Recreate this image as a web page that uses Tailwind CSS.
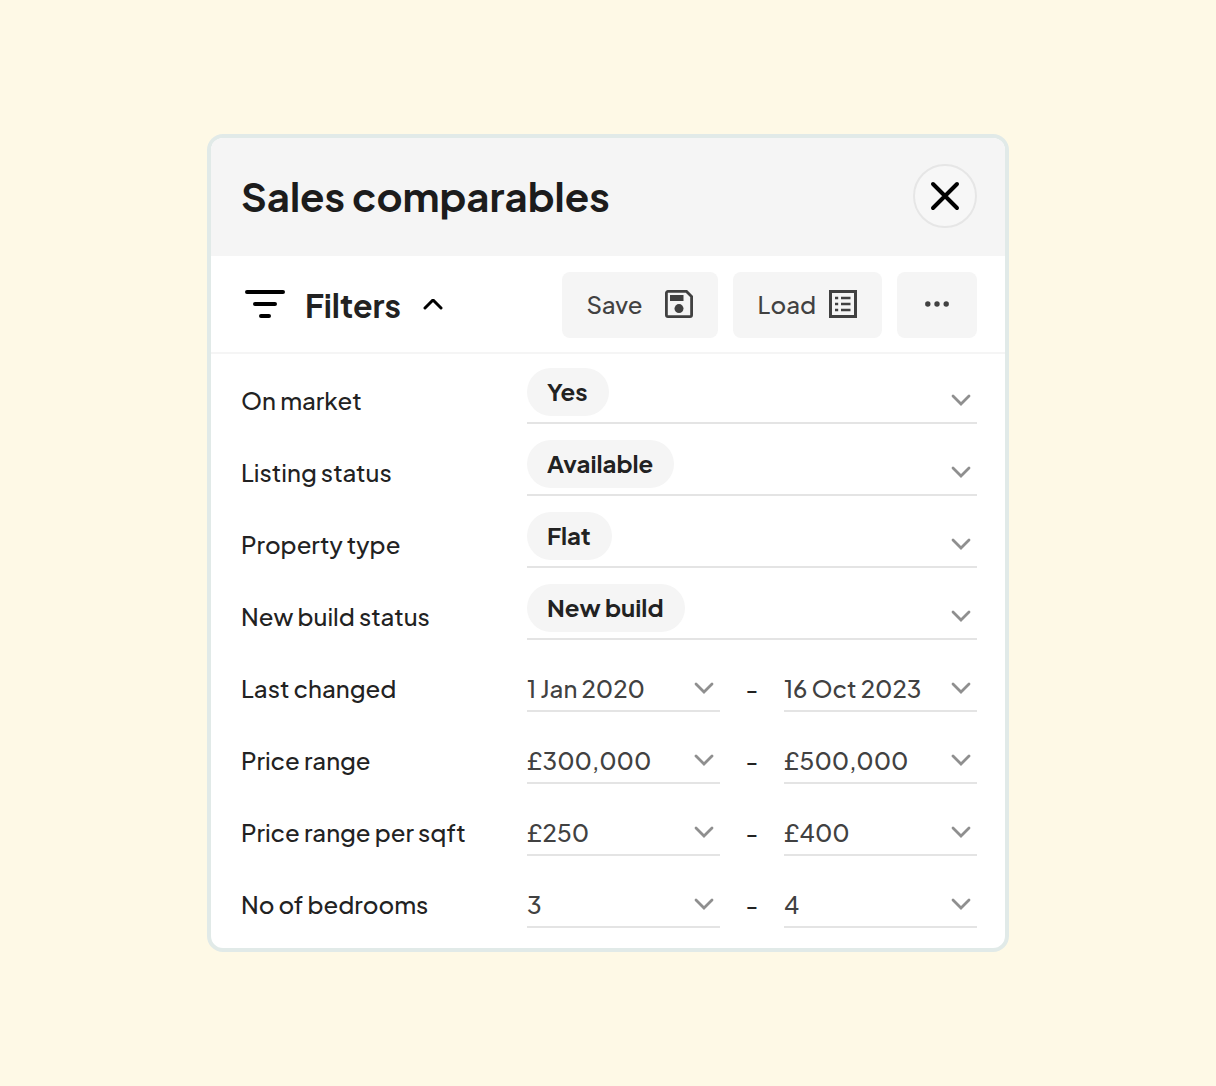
<!DOCTYPE html>
<html lang="en">
<head>
    <meta charset="UTF-8">
    <meta name="viewport" content="width=device-width, initial-scale=1.0">
    <title>Sales comparables</title>
    <script src="https://cdn.jsdelivr.net/npm/@tailwindcss/browser@4"></script>
</head>
<body class="min-h-screen flex items-center justify-center bg-[#fef9e6] font-['Plus_Jakarta_Sans',Inter,sans-serif] text-[#222222]">

    <svg class="hidden" aria-hidden="true">
        <symbol id="chevron-down" viewBox="0 0 20 12">
            <path d="m2 2 8 8 8-8" fill="none" stroke="currentColor" stroke-width="2.8" stroke-linecap="round"/>
        </symbol>
    </svg>

    <main class="w-full max-w-[802px] overflow-hidden rounded-2xl border-4 border-[#e1eae8] bg-white">
        <header class="flex items-center justify-between bg-[#f5f5f5] pt-[26px] pb-7 pl-[30px] pr-7">
            <h1 class="text-[40px] leading-16 font-bold text-[#1c1c1c]">Sales comparables</h1>
            <button type="button" aria-label="Close" class="flex size-16 items-center justify-center rounded-full border-2 border-[#e6e6e6] bg-[#f7f7f7] text-black">
                <svg class="size-8" viewBox="0 0 32 32" fill="none" stroke="currentColor" stroke-width="4" stroke-linecap="round"><path d="m4 4 24 24M28 4 4 28"/></svg>
            </button>
        </header>

        <div class="flex flex-wrap items-center justify-between gap-x-4 border-b-2 border-[#f5f5f5] pt-4 pb-[14px] pl-[34px] pr-7">
            <button type="button" aria-expanded="true" aria-controls="filters" class="flex items-center gap-5">
                <svg class="h-[30px] w-10" viewBox="0 0 40 30" fill="none" stroke="#000" stroke-width="4" stroke-linecap="round"><path d="M2 2h36M10 14h20M16 26h8"/></svg>
                <span class="text-[32px] leading-10 font-bold">Filters</span>
                <svg class="h-3 w-6" viewBox="0 1 24 12" fill="none" stroke="#000" stroke-width="3" stroke-linecap="round"><path d="m4 10 8-8 8 8"/></svg>
            </button>

            <div class="flex gap-[15px] text-2xl font-medium text-[#414141]">
                <button type="button" class="flex h-[66px] items-center justify-between gap-[22px] rounded-lg bg-[#f5f5f5] px-[25px] pb-[2px]">
                    Save
                    <svg class="size-7" viewBox="0 0 28 28" fill="none"><path d="M3 1.4h18.5l5.1 5.1V25a1.6 1.6 0 0 1-1.6 1.6H3A1.6 1.6 0 0 1 1.4 25V3A1.6 1.6 0 0 1 3 1.4Z" stroke="currentColor" stroke-width="2.8"/><path d="M5 5h13.5v6H5z" fill="currentColor"/><circle cx="14" cy="18.6" r="4.5" fill="currentColor"/></svg>
                </button>
                <button type="button" class="flex h-[66px] items-center justify-between gap-[13px] rounded-lg bg-[#f5f5f5] px-[25px] pb-[2px]">
                    Load
                    <svg class="size-7" viewBox="0 0 28 28" fill="none" stroke="currentColor"><path d="M1.5 1.5h25v25h-25z" stroke-width="3"/><path d="M6 8h3.2M12 8h9.5M6 14h3.2M12 14h9.5M6 20h3.2M12 20h9.5" stroke-width="2.6"/></svg>
                </button>
                <button type="button" aria-label="More options" class="flex h-[66px] items-center rounded-lg bg-[#f5f5f5] px-7">
                    <svg class="h-6 w-6" viewBox="0 0 24 24" fill="currentColor"><circle cx="2.8" cy="11" r="2.7"/><circle cx="12" cy="11" r="2.7"/><circle cx="21.2" cy="11" r="2.7"/></svg>
                </button>
            </div>
        </div>

        <form id="filters" class="grid gap-4 pt-[14px] pb-5 pl-[30px] pr-7 text-2xl">
            <!-- Single value filters -->
            <div class="grid grid-cols-[286px_1fr]">
                <label for="on-market" class="flex items-center pt-2 font-medium">On market</label>
                <div class="flex h-14 items-start justify-between border-b-2 border-[#e4e4e4]">
                    <select id="on-market" class="h-12 appearance-none field-sizing-content rounded-full bg-[#f5f5f5] pr-[21px] pb-[2px] pl-5 font-bold">
                        <option>Yes</option>
                    </select>
                    <svg class="mt-[26px] mr-[6px] h-3 w-5 text-[#8f8f8f]"><use href="#chevron-down"/></svg>
                </div>
            </div>
            <div class="grid grid-cols-[286px_1fr]">
                <label for="listing-status" class="flex items-center pt-2 font-medium">Listing status</label>
                <div class="flex h-14 items-start justify-between border-b-2 border-[#e4e4e4]">
                    <select id="listing-status" class="h-12 appearance-none field-sizing-content rounded-full bg-[#f5f5f5] pr-[21px] pb-[2px] pl-5 font-bold">
                        <option>Available</option>
                    </select>
                    <svg class="mt-[26px] mr-[6px] h-3 w-5 text-[#8f8f8f]"><use href="#chevron-down"/></svg>
                </div>
            </div>
            <div class="grid grid-cols-[286px_1fr]">
                <label for="property-type" class="flex items-center pt-2 font-medium">Property type</label>
                <div class="flex h-14 items-start justify-between border-b-2 border-[#e4e4e4]">
                    <select id="property-type" class="h-12 appearance-none field-sizing-content rounded-full bg-[#f5f5f5] pr-[21px] pb-[2px] pl-5 font-bold">
                        <option>Flat</option>
                    </select>
                    <svg class="mt-[26px] mr-[6px] h-3 w-5 text-[#8f8f8f]"><use href="#chevron-down"/></svg>
                </div>
            </div>
            <div class="grid grid-cols-[286px_1fr]">
                <label for="build-status" class="flex items-center pt-2 font-medium">New build status</label>
                <div class="flex h-14 items-start justify-between border-b-2 border-[#e4e4e4]">
                    <select id="build-status" class="h-12 appearance-none field-sizing-content rounded-full bg-[#f5f5f5] pr-[21px] pb-[2px] pl-5 font-bold">
                        <option>New build</option>
                    </select>
                    <svg class="mt-[26px] mr-[6px] h-3 w-5 text-[#8f8f8f]"><use href="#chevron-down"/></svg>
                </div>
            </div>

            <!-- Range filters -->
            <div class="grid grid-cols-[286px_1fr_64px_1fr]">
                <label for="changed-from" class="flex items-center pt-2 font-medium">Last changed</label>
                <div class="relative h-14 border-b-2 border-[#e4e4e4] text-[#414141]">
                    <select id="changed-from" class="size-full appearance-none pt-[10px] font-medium">
                        <option>1 Jan 2020</option>
                    </select>
                    <svg class="pointer-events-none absolute top-[26px] right-[6px] h-3 w-5 text-[#8f8f8f]"><use href="#chevron-down"/></svg>
                </div>
                <span class="flex items-center justify-center pt-2 font-medium">-</span>
                <div class="relative h-14 border-b-2 border-[#e4e4e4] text-[#414141]">
                    <select aria-label="Last changed to" class="size-full appearance-none pt-[10px] font-medium">
                        <option>16 Oct 2023</option>
                    </select>
                    <svg class="pointer-events-none absolute top-[26px] right-[6px] h-3 w-5 text-[#8f8f8f]"><use href="#chevron-down"/></svg>
                </div>
            </div>
            <div class="grid grid-cols-[286px_1fr_64px_1fr]">
                <label for="price-from" class="flex items-center pt-2 font-medium">Price range</label>
                <div class="relative h-14 border-b-2 border-[#e4e4e4] text-[#414141]">
                    <select id="price-from" class="size-full appearance-none pt-[10px] font-medium">
                        <option>£300,000</option>
                    </select>
                    <svg class="pointer-events-none absolute top-[26px] right-[6px] h-3 w-5 text-[#8f8f8f]"><use href="#chevron-down"/></svg>
                </div>
                <span class="flex items-center justify-center pt-2 font-medium">-</span>
                <div class="relative h-14 border-b-2 border-[#e4e4e4] text-[#414141]">
                    <select aria-label="Price range to" class="size-full appearance-none pt-[10px] font-medium">
                        <option>£500,000</option>
                    </select>
                    <svg class="pointer-events-none absolute top-[26px] right-[6px] h-3 w-5 text-[#8f8f8f]"><use href="#chevron-down"/></svg>
                </div>
            </div>
            <div class="grid grid-cols-[286px_1fr_64px_1fr]">
                <label for="sqft-from" class="flex items-center pt-2 font-medium">Price range per sqft</label>
                <div class="relative h-14 border-b-2 border-[#e4e4e4] text-[#414141]">
                    <select id="sqft-from" class="size-full appearance-none pt-[10px] font-medium">
                        <option>£250</option>
                    </select>
                    <svg class="pointer-events-none absolute top-[26px] right-[6px] h-3 w-5 text-[#8f8f8f]"><use href="#chevron-down"/></svg>
                </div>
                <span class="flex items-center justify-center pt-2 font-medium">-</span>
                <div class="relative h-14 border-b-2 border-[#e4e4e4] text-[#414141]">
                    <select aria-label="Price range per sqft to" class="size-full appearance-none pt-[10px] font-medium">
                        <option>£400</option>
                    </select>
                    <svg class="pointer-events-none absolute top-[26px] right-[6px] h-3 w-5 text-[#8f8f8f]"><use href="#chevron-down"/></svg>
                </div>
            </div>
            <div class="grid grid-cols-[286px_1fr_64px_1fr]">
                <label for="beds-from" class="flex items-center pt-2 font-medium">No of bedrooms</label>
                <div class="relative h-14 border-b-2 border-[#e4e4e4] text-[#414141]">
                    <select id="beds-from" class="size-full appearance-none pt-[10px] font-medium">
                        <option>3</option>
                    </select>
                    <svg class="pointer-events-none absolute top-[26px] right-[6px] h-3 w-5 text-[#8f8f8f]"><use href="#chevron-down"/></svg>
                </div>
                <span class="flex items-center justify-center pt-2 font-medium">-</span>
                <div class="relative h-14 border-b-2 border-[#e4e4e4] text-[#414141]">
                    <select aria-label="No of bedrooms to" class="size-full appearance-none pt-[10px] font-medium">
                        <option>4</option>
                    </select>
                    <svg class="pointer-events-none absolute top-[26px] right-[6px] h-3 w-5 text-[#8f8f8f]"><use href="#chevron-down"/></svg>
                </div>
            </div>
        </form>
    </main>

</body>
</html>
